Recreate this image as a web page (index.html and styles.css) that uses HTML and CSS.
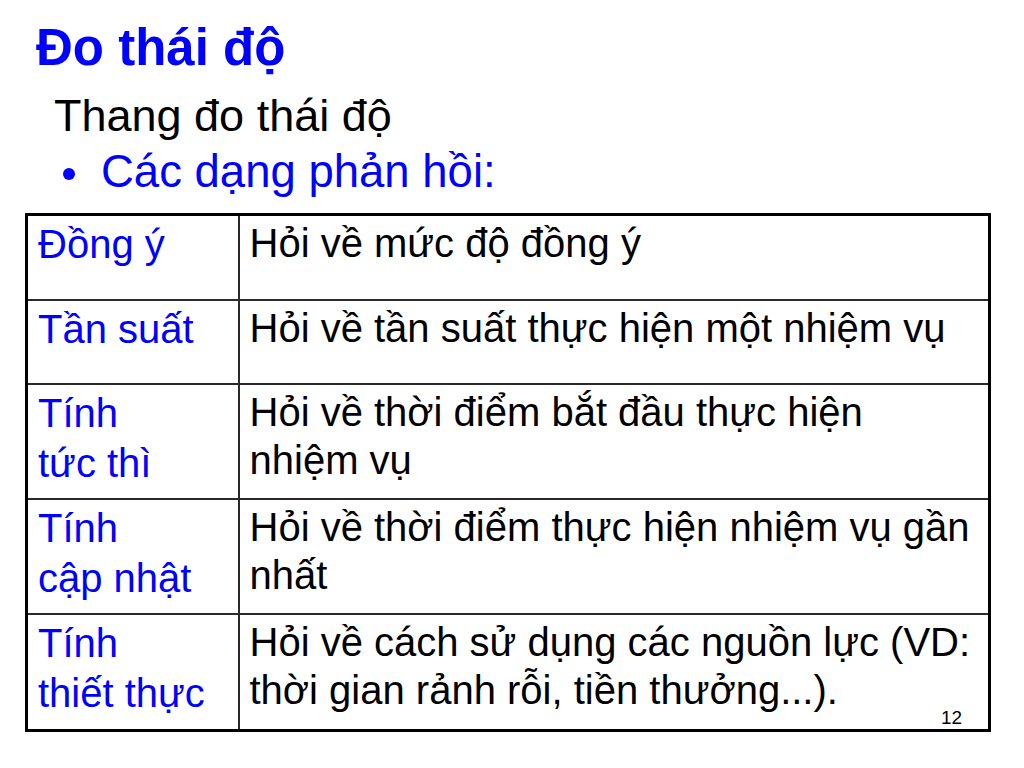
FILE: index.html
```html
<!DOCTYPE html>
<html lang="vi">
<head>
    <meta charset="UTF-8">
    <meta name="viewport" content="width=device-width, initial-scale=1.0">
    <title>Đo thái độ</title>
    <link rel="stylesheet" href="styles.css">
</head>
<body>

<div class="slide">
    <h1 class="slide-title">Đo thái độ</h1>
    <p class="subtitle">Thang đo thái độ</p>
    <ul class="bullets">
        <li>Các dạng phản hồi:</li>
    </ul>

    <table class="scale-table">
        <tr class="row-first">
            <td class="kind">Đồng ý</td>
            <td class="desc">Hỏi về mức độ đồng ý</td>
        </tr>
        <tr class="row-short">
            <td class="kind">Tần suất</td>
            <td class="desc">Hỏi về tần suất thực hiện một nhiệm vụ</td>
        </tr>
        <tr class="row-tall">
            <td class="kind">Tính<br>tức thì</td>
            <td class="desc">Hỏi về thời điểm bắt đầu thực hiện<br>nhiệm vụ</td>
        </tr>
        <tr class="row-tall">
            <td class="kind">Tính<br>cập nhật</td>
            <td class="desc">Hỏi về thời điểm thực hiện nhiệm vụ gần<br>nhất</td>
        </tr>
        <tr class="row-last">
            <td class="kind">Tính<br>thiết thực</td>
            <td class="desc">Hỏi về cách sử dụng các nguồn lực (VD:<br>thời gian rảnh rỗi, tiền thưởng...).</td>
        </tr>
    </table>

    <span class="page-num">12</span>
</div>

</body>
</html>
```

FILE: styles.css
```css
* {
    margin: 0;
    padding: 0;
    box-sizing: border-box;
}

body {
    font-family: "Liberation Sans", Arial, sans-serif;
    background: #ffffff;
    color: #000000;
}

.slide {
    position: relative;
    width: 1024px;
    height: 768px;
    padding: 20px 0 0 25px;
    overflow: hidden;
}

.slide-title {
    font-size: 51px;
    font-weight: bold;
    color: #0000ff;
    line-height: 56px;
    padding-left: 11px;
}

.subtitle {
    font-size: 45px;
    line-height: 56px;
    padding-left: 29px;
    margin-top: 12px;
}

.bullets {
    list-style: none;
    color: #0000ff;
    font-size: 45.5px;
    line-height: 56px;
    padding-left: 76px;
    margin-top: 0;
}

.bullets li {
    position: relative;
}

.bullets li::before {
    content: "";
    position: absolute;
    left: -38px;
    top: 24px;
    width: 12px;
    height: 12px;
    border-radius: 50%;
    background: #0000ff;
}

.scale-table {
    margin-top: 13px;
    width: 966px;
    border-collapse: collapse;
    border: 3px solid #000000;
    table-layout: fixed;
}

.scale-table td {
    border: 2px solid #2a2a2a;
    vertical-align: top;
    font-size: 40px;
    line-height: 48px;
    padding: 3px 8px 0 10px;
}

.scale-table .kind {
    width: 212px;
    color: #0000ff;
    line-height: 50px;
}

.row-first {
    height: 85px;
}

.row-short {
    height: 84px;
}

.row-tall {
    height: 115px;
}

.row-last {
    height: 117px;
}

.page-num {
    position: absolute;
    left: 941px;
    top: 707px;
    font-size: 19px;
    color: #000000;
}
```
